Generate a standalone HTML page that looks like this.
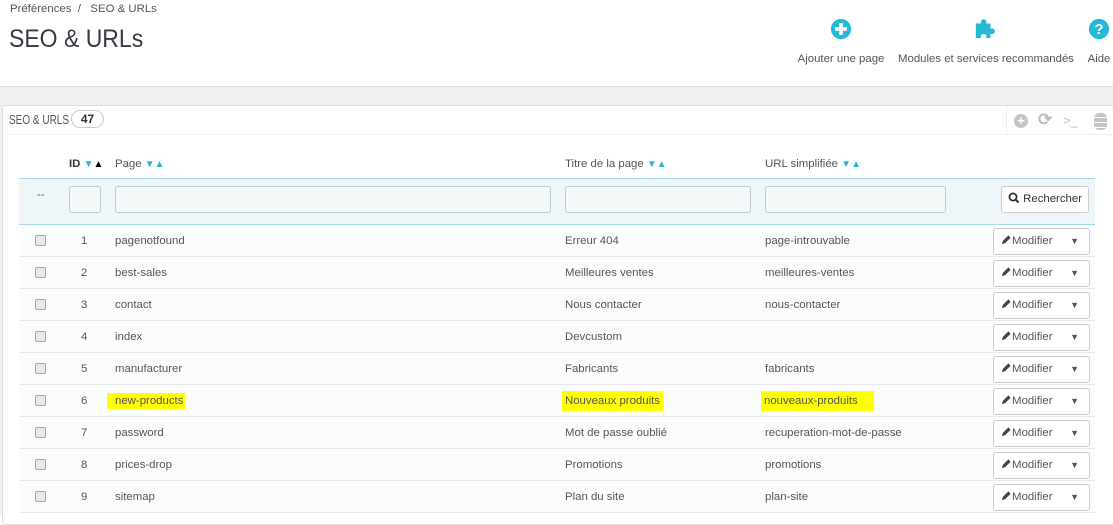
<!DOCTYPE html>
<html><head><meta charset="utf-8"><style>
*{box-sizing:border-box;margin:0;padding:0}
body{width:1113px;height:515px;overflow:hidden;background:#fff;font-family:"Liberation Sans",sans-serif;font-size:11.4px;color:#555;position:relative}
.abs{position:absolute;white-space:nowrap}
.bc{left:10px;top:3px;font-size:11.4px;color:#555}
h1{position:absolute;left:9px;top:25px;font-weight:normal;font-size:25px;color:#363a41;transform:scaleX(0.92);transform-origin:left}
.tb{top:18px;text-align:center;font-size:11.4px;color:#555}
.gray{left:0;top:86px;width:1113px;height:429px;background:#eff1f2;border-top:1px solid #dcdcdc}
.panel{left:2px;top:105px;width:1120px;height:420px;background:#fff;border:1px solid #dcdcdc;border-radius:4px}
.ph{left:9px;top:113px;font-size:12.5px;color:#555;transform:scaleX(0.8);transform-origin:left}
.badge{left:71px;top:110px;width:33px;height:18px;border:1px solid #ccc;border-radius:9px;text-align:center;font-weight:bold;font-size:12px;line-height:16px;color:#333}
.hline{left:9px;top:134px;width:1104px;height:1px;background:#eee}
.th{top:158px;font-size:11.4px;color:#555}
.ar{color:#25b9d7;font-size:10px}
.filt{left:19px;top:178px;width:1076px;height:47px;background:#eff6fa;border-top:1px solid #a8d8ed;border-bottom:1px solid #a8d8ed}
.inp{top:186px;height:27px;background:#f5f8f9;border:1px solid #bbcdd2;border-radius:3px}
.btn{background:#fff;border:1px solid #ccc;border-radius:3px;color:#555}
.row{left:19px;width:1076px;height:32px;border-bottom:1px solid #e6e8ea;background:#fbfcfd}
.cb{width:11px;height:11px;border:1px solid #aaa;border-radius:2px;background:#e8e8e8}
.hl{background:#ffff00}
</style></head><body>
<div class="abs bc">Préférences &nbsp;/ &nbsp; SEO &amp; URLs</div>
<h1>SEO &amp; URLs</h1>
<div class="abs tb" style="left:797px;width:88px">
<svg width="22" height="22" viewBox="0 0 24 24" style="display:block;margin:0 auto 13px"><circle cx="12" cy="12" r="11" fill="#25b9d7"/><rect x="10" y="5.5" width="4" height="13" fill="#fff"/><rect x="5.5" y="10" width="13" height="4" fill="#fff"/></svg>Ajouter une page</div>
<div class="abs tb" style="left:898px;width:174px">
<svg width="22" height="22" viewBox="0 0 24 24" style="display:block;margin:0 auto 13px"><path d="M2 6h6a3 3 0 1 1 5 0h5v6a3 3 0 1 1 0 5v5h-5a3 3 0 1 0-5 0H2z" fill="#25b9d7"/></svg>Modules et services recommandés</div>
<div class="abs tb" style="left:1087px;width:24px">
<svg width="22" height="22" viewBox="0 0 24 24" style="display:block;margin:0 auto 13px"><circle cx="12" cy="12" r="11" fill="#25b9d7"/><text x="12" y="17.5" text-anchor="middle" font-size="16" font-weight="bold" fill="#fff" font-family="Liberation Sans">?</text></svg>Aide</div>
<div class="abs gray"></div>
<div class="abs panel"></div>
<div class="abs ph">SEO &amp; URLS</div>
<div class="abs badge">47</div>
<div class="abs" style="left:1006px;top:108px;width:107px;height:26px;color:#bbb;font-size:15px">
<span class="abs" style="left:8px;top:6px;width:14px;height:14px;border-radius:50%;background:#c4c4c4;color:#fff;font-size:13px;line-height:14px;text-align:center;font-weight:bold">+</span>
<span class="abs" style="left:32px;top:2px;font-weight:bold;font-size:17px">⟳</span>
<span class="abs" style="left:57px;top:5px;font-size:13px">&gt;_</span>
<span class="abs" style="left:88px;top:5px;width:13px;height:17px;background:repeating-linear-gradient(#c4c4c4 0 4px,#fff 4px 5px);border-radius:5px"></span>
</div>
<div class="abs" style="left:1006px;top:106px;width:1px;height:28px;background:#eee"></div>
<div class="abs hline"></div>
<div class="abs th" style="left:69px;font-weight:bold;color:#333">ID <span class="ar">▼</span><span style="color:#000;font-size:10px">▲</span></div>
<div class="abs th" style="left:115px">Page <span class="ar">▼▲</span></div>
<div class="abs th" style="left:565px">Titre de la page <span class="ar">▼▲</span></div>
<div class="abs th" style="left:765px">URL simplifiée <span class="ar">▼▲</span></div>
<div class="abs filt"></div>
<div class="abs" style="left:37px;top:189px">--</div>
<div class="abs inp" style="left:69px;width:32px"></div>
<div class="abs inp" style="left:115px;width:436px"></div>
<div class="abs inp" style="left:565px;width:186px"></div>
<div class="abs inp" style="left:765px;width:181px"></div>
<div class="abs btn" style="left:1001px;top:186px;width:88px;height:27px;line-height:25px;text-align:center;color:#333"><svg width="12" height="12" viewBox="0 0 12 12" style="vertical-align:-2px"><circle cx="5" cy="5" r="3.6" fill="none" stroke="#333" stroke-width="1.8"/><path d="M7.5 7.5l3 3" stroke="#333" stroke-width="2"/></svg> Rechercher</div>

<div class="abs row" style="top:225px"></div>
<div class="abs row" style="top:257px"></div>
<div class="abs row" style="top:289px"></div>
<div class="abs row" style="top:321px"></div>
<div class="abs row" style="top:353px"></div>
<div class="abs row" style="top:385px"></div>
<div class="abs row" style="top:417px"></div>
<div class="abs row" style="top:449px"></div>
<div class="abs row" style="top:481px"></div>

<div id="rows"></div>
<script>
var d=[["1","pagenotfound","Erreur 404","page-introuvable"],["2","best-sales","Meilleures ventes","meilleures-ventes"],["3","contact","Nous contacter","nous-contacter"],["4","index","Devcustom",""],["5","manufacturer","Fabricants","fabricants"],["6","new-products","Nouveaux produits","nouveaux-produits"],["7","password","Mot de passe oublié","recuperation-mot-de-passe"],["8","prices-drop","Promotions","promotions"],["9","sitemap","Plan du site","plan-site"]];
var h="";
d.forEach(function(r,i){var y=225+i*32;var t=y+10;var hl=i==5;
h+='<div class="abs cb" style="left:35px;top:'+(y+10)+'px"></div>';
h+='<div class="abs" style="left:81px;top:'+t+'px">'+r[0]+'</div>';
h+='<div class="abs'+(hl?' hl':'')+'" style="left:'+(hl?107:115)+'px;top:'+(t-2)+'px;padding:2px '+(hl?'2px 2px 8px':'0')+'">'+r[1]+'</div>';
h+='<div class="abs'+(hl?' hl':'')+'" style="left:'+(hl?562:565)+'px;top:'+(t-4)+'px;padding:4px '+(hl?'3px':'0')+'">'+r[2]+'</div>';
h+='<div class="abs'+(hl?' hl':'')+'" style="left:'+(hl?761:765)+'px;top:'+(t-4)+'px;padding:4px '+(hl?'16px 4px 3px':'0')+'">'+r[3]+'</div>';
h+='<div class="abs btn" style="left:993px;top:'+(y+3)+'px;width:97px;height:27px;line-height:25px;padding-left:7px;color:#555"><svg width="11" height="11" viewBox="0 0 12 12" style="vertical-align:-1px"><path d="M1 11l1-3.5 6-6 2.5 2.5-6 6z" fill="#444"/></svg>Modifier<span style="position:absolute;right:10px;top:0;font-size:9px;color:#555">▼</span></div>';
});
document.getElementById("rows").innerHTML=h;
</script>
</body></html>
